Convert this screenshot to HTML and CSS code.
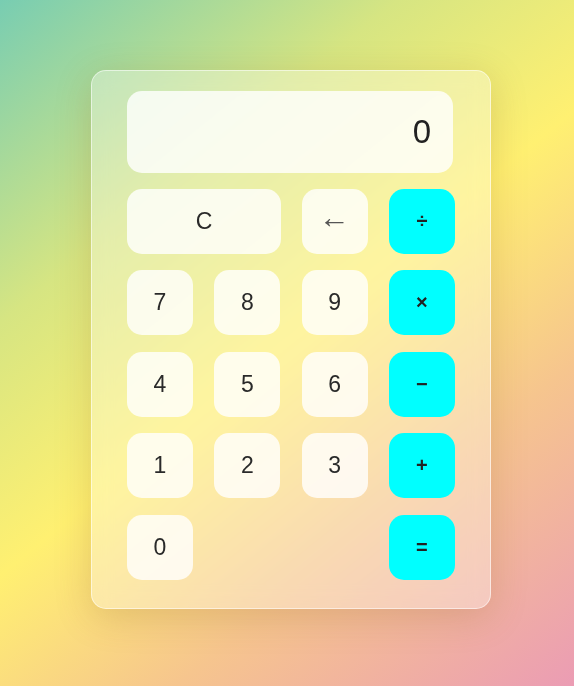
FILE: index.html
```html
<!DOCTYPE html>
<html lang="en">
<head>
<meta charset="utf-8">
<title>Calculator</title>
<link rel="stylesheet" href="styles.css">
</head>
<body>
<main class="page">
  <div class="calculator">
    <div class="display">0</div>
    <div class="keys">
      <button class="key key-wide">C</button>
      <button class="key key-back">←</button>
      <button class="key key-op">÷</button>
      <button class="key">7</button>
      <button class="key">8</button>
      <button class="key">9</button>
      <button class="key key-op">×</button>
      <button class="key">4</button>
      <button class="key">5</button>
      <button class="key">6</button>
      <button class="key key-op">−</button>
      <button class="key">1</button>
      <button class="key">2</button>
      <button class="key">3</button>
      <button class="key key-op">+</button>
      <button class="key">0</button>
      <span class="key-gap"></span>
      <button class="key key-op">=</button>
    </div>
  </div>
</main>
</body>
</html>
```
FILE: styles.css
```css
* { box-sizing: border-box; }

html, body {
  margin: 0;
  height: 100%;
}

body {
  font-family: "Liberation Sans", Arial, sans-serif;
  background: linear-gradient(141deg, #78cdb2 0%, #d6e582 28%, #fff071 50%, #f6c58e 72%, #eb9cb4 100%);
  overflow: hidden;
}

.page {
  padding: 70px 0 0 91px;
}

.calculator {
  width: 400px;
  height: 539px;
  padding: 21px 36px 29px 36px;
  border-radius: 15px;
  background: rgba(255, 255, 255, 0.33);
  border: 1px solid rgba(255, 255, 255, 0.55);
  box-shadow: 0 8px 36px rgba(140, 90, 30, 0.22);
  backdrop-filter: blur(10px);
}

.display {
  width: 326px;
  height: 82px;
  margin-top: -1px;
  margin-left: -1px;
  margin-bottom: 16px;
  padding: 0 22px;
  border-radius: 15px;
  background: rgba(255, 255, 255, 0.8);
  color: #222;
  font-size: 33px;
  display: flex;
  align-items: center;
  justify-content: flex-end;
}

.keys {
  display: grid;
  grid-template-columns: repeat(4, 66px);
  grid-auto-rows: 64.7px;
  column-gap: 21.3px;
  row-gap: 16.8px;
  margin-left: -1px;
}

.key {
  border: none;
  border-radius: 15px;
  background: rgba(255, 255, 255, 0.8);
  color: #2a2a2a;
  font-family: "Liberation Sans", Arial, sans-serif;
  font-size: 23px;
  padding: 0;
  display: flex;
  align-items: center;
  justify-content: center;
}

.key-wide {
  grid-column: span 2;
  width: 154px;
}

.key-gap {
  grid-column: span 2;
}

.key-back {
  font-size: 31px;
  color: #555;
  padding-bottom: 6px;
}

.key-op {
  background: #00ffff;
  font-size: 20px;
  font-weight: 700;
  color: #222;
}
```
